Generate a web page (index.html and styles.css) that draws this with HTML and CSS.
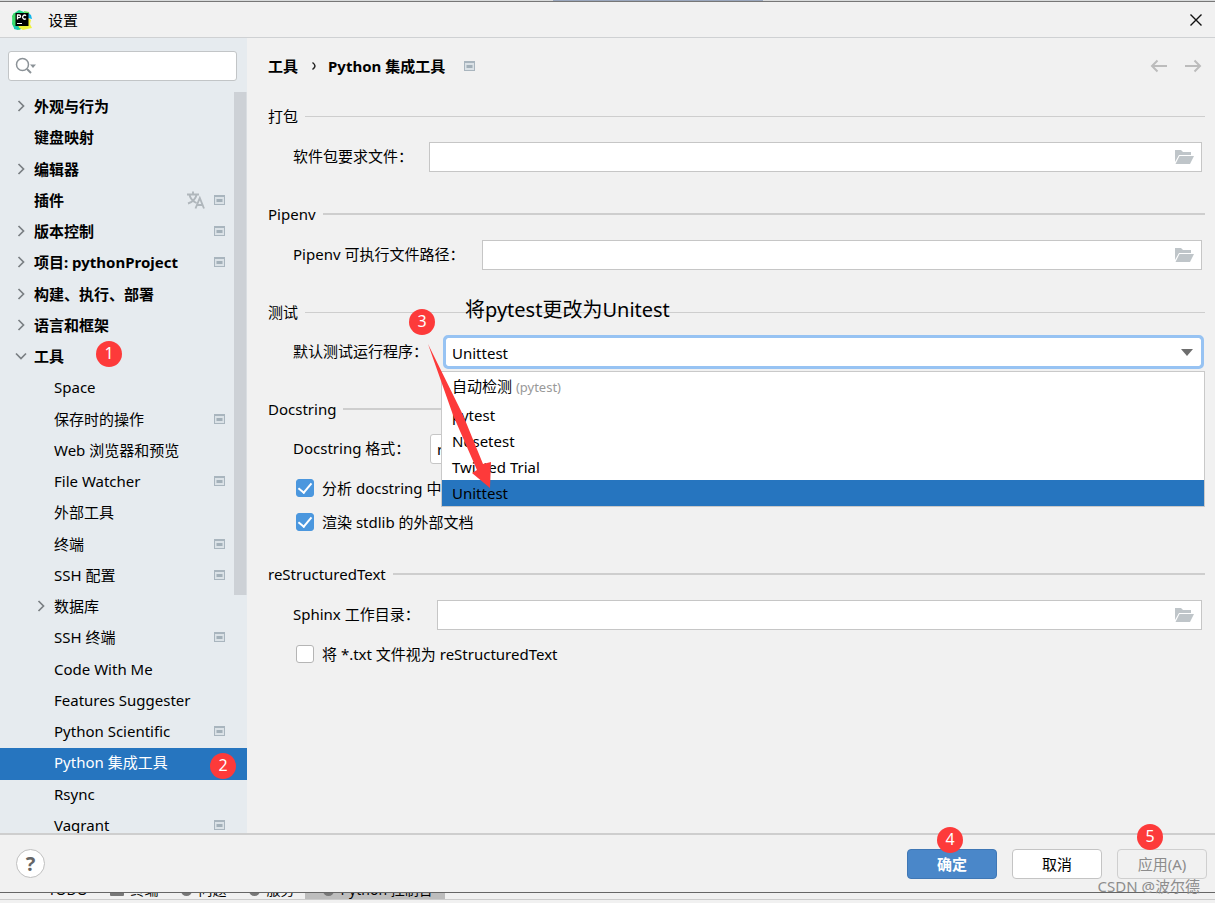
FILE: index.html
```html
<!DOCTYPE html>
<html lang="zh-CN">
<head>
<meta charset="utf-8">
<title>设置</title>
<link rel="stylesheet" href="styles.css">
</head>
<body>
<svg class="defs" aria-hidden="true">
  <symbol id="chev" viewBox="0 0 14 14"><path d="M4.500 2l5 5-5 5" fill="none" stroke="#7a7f83" stroke-width="1.700"/></symbol>
  <symbol id="chevdown" viewBox="0 0 14 14"><path d="M2 4.500l5 5 5-5" fill="none" stroke="#7a7f83" stroke-width="1.700"/></symbol>
  <symbol id="proj" viewBox="0 0 11 10"><path d="M0 0h11v10H0z" fill="#a9b5be"/><path d="M1 2h9v7H1z" fill="#dbe2e7"/><path d="M2.500 4h6v3h-6z" fill="#a3b0b9"/></symbol>
  <symbol id="folder" viewBox="0 0 20 16"><path d="M1 13V1h6l2 2h8v3H5L1 13z" fill="#bfc5c9"/><path d="M5.500 7H20l-4 8H1.500z" fill="#bfc5c9"/></symbol>
</svg>

<div class="topedge"><span></span></div>
<header class="titlebar">
  <svg class="logo" viewBox="0 0 20 20" aria-hidden="true">
    <path d="M1 4l6-4 5 2 2 3v12l-3 1-4 2-5-2-2-4z" fill="#21d789"/>
    <path d="M0 6l2-3 3 1v12l-4-1z" fill="#3ddc6a"/>
    <path d="M12 1l5 1 1 5-5-1z" fill="#5fe05a"/>
    <path d="M16 8l3 2-1 4 2 4-5 1-4 1-5-3z" fill="#eef23c"/>
    <path d="M16 3l3 2 1 4-4-1z" fill="#12b5ea"/>
    <path d="M2 16l5 1-1 3-4-1z" fill="#1cc7b4"/>
    <path d="M3.500 3h13v13h-13z" fill="#000"/>
    <path d="M5.500 9.500V5H7.200a1.300 1.300 0 0 1 0 2.700H5.500M14 5.700a2 2 0 1 0 0 2.900" fill="none" stroke="#fff" stroke-width="1.300"/>
    <path d="M5 13h5v1H5z" fill="#fff"/>
  </svg>
  <h1>设置</h1>
  <button class="close" aria-label="关闭"><svg viewBox="0 0 14 14"><path d="M1.500 1.500l11 11m0-11l-11 11" stroke="#111" stroke-width="1.400"/></svg></button>
</header>

<div class="body">
  <nav class="side">
    <label class="search">
      <svg viewBox="0 0 22 18" aria-hidden="true"><circle cx="7.500" cy="7.500" r="6" fill="none" stroke="#8b9297" stroke-width="1.500"/><path d="M12 12l4 4" stroke="#8b9297" stroke-width="2"/><path d="M15 7.500h6l-3 3.500z" fill="#8b9297"/></svg>
      <input type="search" aria-label="搜索">
    </label>
    <div class="treewrap">
      <ul class="tree">
        <li class="top"><svg class="ch"><use href="#chev"/></svg><span>外观与行为</span></li>
        <li class="top"><i class="ch"></i><span>键盘映射</span></li>
        <li class="top"><svg class="ch"><use href="#chev"/></svg><span>编辑器</span></li>
        <li class="top"><i class="ch"></i><span>插件</span><svg class="lang" viewBox="0 0 18 18"><path d="M0 3.500h12M6 .5v3M2.500 4c1 4 4 6.500 7 8M9.500 4c-1 4-4 7-8.500 8.500M8.500 17.500L12.800 7l4.200 10.500M10 14h5.500" fill="none" stroke="#b0b7bc" stroke-width="1.900"/></svg><svg class="pj"><use href="#proj"/></svg></li>
        <li class="top"><svg class="ch"><use href="#chev"/></svg><span>版本控制</span><svg class="pj"><use href="#proj"/></svg></li>
        <li class="top"><svg class="ch"><use href="#chev"/></svg><span>项目: pythonProject</span><svg class="pj"><use href="#proj"/></svg></li>
        <li class="top"><svg class="ch"><use href="#chev"/></svg><span>构建、执行、部署</span></li>
        <li class="top"><svg class="ch"><use href="#chev"/></svg><span>语言和框架</span></li>
        <li class="top"><svg class="ch"><use href="#chevdown"/></svg><span>工具</span><b class="badge b1">1</b></li>
        <li><i class="ch"></i><span>Space</span></li>
        <li><i class="ch"></i><span>保存时的操作</span><svg class="pj"><use href="#proj"/></svg></li>
        <li><i class="ch"></i><span>Web 浏览器和预览</span></li>
        <li><i class="ch"></i><span>File Watcher</span><svg class="pj"><use href="#proj"/></svg></li>
        <li><i class="ch"></i><span>外部工具</span></li>
        <li><i class="ch"></i><span>终端</span><svg class="pj"><use href="#proj"/></svg></li>
        <li><i class="ch"></i><span>SSH 配置</span><svg class="pj"><use href="#proj"/></svg></li>
        <li><svg class="ch"><use href="#chev"/></svg><span>数据库</span></li>
        <li><i class="ch"></i><span>SSH 终端</span><svg class="pj"><use href="#proj"/></svg></li>
        <li><i class="ch"></i><span>Code With Me</span></li>
        <li><i class="ch"></i><span>Features Suggester</span></li>
        <li><i class="ch"></i><span>Python Scientific</span><svg class="pj"><use href="#proj"/></svg></li>
        <li class="selected"><i class="ch"></i><span>Python 集成工具</span><b class="badge b2">2</b></li>
        <li><i class="ch"></i><span>Rsync</span></li>
        <li><i class="ch"></i><span>Vagrant</span><svg class="pj"><use href="#proj"/></svg></li>
      </ul>
      <div class="scrollbar"></div>
    </div>
  </nav>

  <main class="content">
    <div class="crumbs">
      <strong>工具</strong><svg class="sep" viewBox="0 0 6 10"><path d="M1.500 1.500q2.500 2 2.500 3.500t-2.500 3.500" fill="none" stroke="#222" stroke-width="1.500"/></svg><strong>Python 集成工具</strong><svg class="pj"><use href="#proj"/></svg>
      <div class="history">
        <button aria-label="后退"><svg viewBox="0 0 18 14"><path d="M17 7H2M7.500 1.500L2 7l5.500 5.500" fill="none" stroke="#bcbcbc" stroke-width="2"/></svg></button>
        <button aria-label="前进"><svg viewBox="0 0 18 14"><path d="M1 7h15M10.500 1.500L16 7l-5.500 5.500" fill="none" stroke="#bcbcbc" stroke-width="2"/></svg></button>
      </div>
    </div>

    <section>
      <h2>打包</h2>
      <div class="field req"><label for="req">软件包要求文件：</label><div class="path"><input id="req" type="text"><button aria-label="浏览"><svg><use href="#folder"/></svg></button></div></div>
    </section>
    <section>
      <h2 class="thick">Pipenv</h2>
      <div class="field env"><label for="env">Pipenv 可执行文件路径：</label><div class="path"><input id="env" type="text"><button aria-label="浏览"><svg><use href="#folder"/></svg></button></div></div>
    </section>
    <section class="testing">
      <h2>测试</h2>
      <p class="note">将pytest更改为Unitest</p>
      <div class="field runner"><label for="runner">默认测试运行程序：</label>
        <div class="combo">
          <select id="runner"><option>Unittest</option></select>
          <ul class="menu" role="listbox" aria-label="默认测试运行程序">
            <li role="option">自动检测 <small>(pytest)</small></li>
            <li role="option">pytest</li>
            <li role="option">Nosetest</li>
            <li role="option">Twisted Trial</li>
            <li role="option" aria-selected="true">Unittest</li>
          </ul>
        </div>
      </div>
      <b class="badge b3">3</b>
      <svg class="arrow" viewBox="0 0 66 148" aria-hidden="true"><path d="M0 0L35 71 55 120 63 118 62 144 44 129 49 126 25 71Z" fill="#fd3a3a"/></svg>
    </section>
    <section class="doc">
      <h2 class="thick">Docstring</h2>
      <div class="field fmt"><label for="fmt">Docstring 格式：</label><select id="fmt"><option>reStructuredText</option></select></div>
      <div class="checks">
        <label><input type="checkbox" checked>分析 docstring 中的 Python 代码</label>
        <label><input type="checkbox" checked>渲染 stdlib 的外部文档</label>
      </div>
    </section>
    <section>
      <h2 class="thick">reStructuredText</h2>
      <div class="field sphinx"><label for="sphinx">Sphinx 工作目录：</label><div class="path"><input id="sphinx" type="text"><button aria-label="浏览"><svg><use href="#folder"/></svg></button></div></div>
      <div class="checks"><label><input type="checkbox">将 *.txt 文件视为 reStructuredText</label></div>
    </section>
  </main>
</div>

<footer class="actions">
  <button class="help" aria-label="帮助">?</button>
  <button class="btn primary">确定<b class="badge b4">4</b></button>
  <button class="btn">取消</button>
  <button class="btn off">应用(A)<b class="badge b5">5</b></button>
  <span class="mark">CSDN @波尔德</span>
</footer>
<div class="statusbar">
  <span>TODO</span>
  <span><i class="bar"></i>终端</span>
  <span><i></i>问题</span>
  <span><i></i>服务</span>
  <span class="active"><i></i>Python 控制台</span>
</div>
</body>
</html>
```

FILE: styles.css
```css
* { box-sizing: border-box; }
body {
  margin: 0;
  height: 100vh;
  display: flex;
  flex-direction: column;
  overflow: hidden;
  background: #f1f1f1;
  color: #000;
  font: 15px/20px "Noto Sans", "Noto Sans CJK SC", sans-serif;
}
button, input, select { font: inherit; color: inherit; }
button { background: none; border: 0; padding: 0; }
ul { list-style: none; margin: 0; padding: 0; }
svg { display: block; flex: none; }
.defs { position: absolute; width: 0; height: 0; }

.topedge { height: 2px; background: #d8dadb; border-bottom: 1px solid #777; }
.topedge span { display: block; width: 210px; height: 1px; margin-left: 553px; background: #9aa7bd; }
.titlebar { height: 36px; display: flex; align-items: center; padding: 0 12px; border-bottom: 1px solid #cfd1d3; }
.logo { width: 20px; height: 20px; }
.titlebar h1 { flex: 1; margin: 0 0 0 16px; font-size: 15px; font-weight: 400; }
.close svg { width: 14px; height: 14px; }

.body { flex: 1; min-height: 0; display: flex; }
.side { width: 247px; flex: none; display: flex; flex-direction: column; background: #e6ebef; }
.search {
  display: flex;
  align-items: center;
  height: 30px;
  margin: 13px 10px 11px 8px;
  padding: 0 6px;
  background: #fff;
  border: 1px solid #c2c5c7;
  border-radius: 3px;
}
.search svg { width: 22px; height: 18px; }
.search input { flex: 1; min-width: 0; border: 0; outline: 0; background: none; }
.treewrap { flex: 1; min-height: 0; position: relative; overflow: hidden; }
.tree { display: grid; grid-auto-rows: 1fr; height: 750px; }
.tree li { position: relative; display: flex; align-items: center; padding: 0 22px 3px 34px; }
.tree li.top { padding-left: 14px; font-weight: 700; }
.tree .ch { width: 14px; height: 14px; margin-right: 6px; }
.tree span { flex: 1; white-space: nowrap; }
.tree .lang { width: 18px; height: 18px; margin-right: 9px; }
.pj { width: 11px; height: 10px; }
.tree li.selected { background: #2675bf; color: #fff; }
.scrollbar { position: absolute; top: 0; right: 0; width: 13px; height: 503px; background: #cdd1d6; border-right: 1px solid #d9dde1; }

.badge {
  position: absolute;
  width: 26px;
  height: 26px;
  border-radius: 50%;
  background: #fd3a3a;
  color: #fff;
  font-size: 16px;
  font-weight: 400;
  line-height: 24px;
  text-align: center;
}
.b1 { left: 96px; top: -1px; }
.b2 { right: 11px; top: 5px; }
.b3 { left: 141px; top: 11px; }
.b4 { left: 29px; top: -23px; }
.b5 { left: 19px; top: -26px; }

.content { flex: 1; min-width: 0; padding: 14px 10px 0 21px; }
.crumbs { display: flex; align-items: center; height: 28px; margin-bottom: 22px; }
.sep { width: 6px; height: 10px; margin: 0 11px 0 13px; }
.crumbs .pj { margin-left: 19px; }
.history { display: flex; gap: 16px; margin: 0 3px 0 auto; }
.history svg { width: 18px; height: 14px; }

section { position: relative; margin-bottom: 28px; }
h2 { display: flex; align-items: center; gap: 7px; height: 28px; margin: 0 0 12px; font-size: 15px; font-weight: 400; }
h2::after { content: ""; flex: 1; height: 1px; background: #cecece; }
h2.thick::after { height: 2px; }
.field { display: flex; align-items: center; height: 30px; padding: 0 3px 0 25px; }
.field > label { flex: none; padding-bottom: 2px; white-space: nowrap; }
.req > label { width: 136px; }
.env > label { width: 189px; }
.runner > label { width: 152px; }
.fmt > label { width: 137px; }
.sphinx > label { width: 144px; }
.path { flex: 1; display: flex; align-items: center; height: 30px; padding: 0 7px; background: #fff; border: 1px solid #c6c6c6; }
.path input { flex: 1; min-width: 0; border: 0; outline: 0; background: none; }
.path svg { width: 20px; height: 16px; }

.combo { flex: 1; position: relative; }
select { appearance: none; background: #fff; border: 1px solid #c6c6c6; border-radius: 3px; }
.combo select { display: block; width: 100%; height: 30px; padding: 1px 6px 0; border: 1px solid #7fb0e6; outline: 3px solid #97c3f3; outline-offset: -1px; }
.combo::after { content: ""; position: absolute; right: 9px; top: 12px; border: 6px solid transparent; border-top: 7px solid #6e6e6e; border-bottom: 0; }
#fmt { width: 180px; height: 30px; padding: 0 6px; }
.menu { position: absolute; z-index: 1; top: 34px; left: -4px; right: -3px; padding-top: 2px; background: #fff; border: 1px solid #c9c9c9; }
.menu li { height: 26px; padding: 0 10px; line-height: 26px; }
.menu li:first-child { line-height: 25px; }
.menu li:nth-child(2) { margin-top: 2px; }
.menu small { font-size: 13px; color: #999; }
.menu li[aria-selected] { background: #2675bf; }
.note { position: absolute; left: 197px; top: 0; margin: 0; font-size: 20px; line-height: 24px; }
.arrow { position: absolute; z-index: 2; left: 160px; top: 46px; width: 66px; height: 148px; }
.testing { z-index: 1; }
.testing h2 { margin-bottom: 11px; }

.doc h2 { margin-bottom: 11px; }
.doc { margin-bottom: 21px; }
.checks { padding: 7px 0 0 28px; }
.checks label { display: flex; align-items: center; gap: 8px; height: 34px; }
.checks input { appearance: none; flex: none; width: 18px; height: 18px; margin: 0; background: #fff; border: 1px solid #b5b5b5; border-radius: 3px; }
.checks input:checked { background: #4b97de; border-color: #4b97de; display: grid; place-items: center; }
.checks input:checked::after { content: ""; width: 6px; height: 11px; margin-top: -3px; border: solid #fff; border-width: 0 2px 2px 0; transform: rotate(40deg); }

.actions { position: relative; flex: none; display: flex; align-items: center; gap: 15px; height: 60px; padding: 0 8px 0 16px; border-top: 2px solid #cecece; border-bottom: 1px solid #666; }
.help { width: 29px; height: 29px; margin-right: auto; background: #fff; border: 1px solid #bfbfbf; border-radius: 50%; color: #666; font-size: 20px; font-weight: 700; line-height: 26px; }
.btn { position: relative; width: 90px; height: 30px; background: #fff; border: 1px solid #c4c4c4; border-radius: 4px; }
.primary { background: #4a87c9; border-color: #3f77b5; color: #fff; font-weight: 700; }
.off { background: none; border-color: #cfcfcf; color: #8c8c8c; }
.mark { position: absolute; right: 15px; bottom: -4px; font-size: 15px; color: #8d8d8d; }

.statusbar { flex: none; display: flex; align-items: flex-end; gap: 22px; height: 7px; margin-bottom: 3px; padding-left: 48px; overflow: hidden; border-bottom: 1px solid #ccc; font-size: 14px; line-height: 18px; }
.statusbar span { display: flex; align-items: center; gap: 7px; white-space: nowrap; }
.statusbar i { width: 11px; height: 11px; border-radius: 50%; background: #777; }
.statusbar .bar { width: 14px; border-radius: 1px; }
.statusbar .active { margin-left: -12px; padding: 0 12px 0 18px; background: #bdbdbd; }
```
